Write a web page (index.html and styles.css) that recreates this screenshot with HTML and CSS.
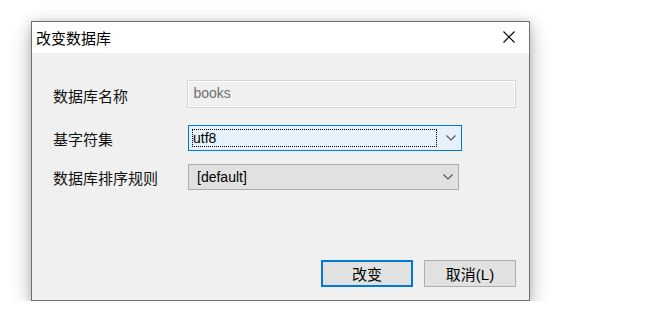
FILE: index.html
```html
<!DOCTYPE html>
<html lang="zh">
<head>
<meta charset="utf-8">
<title>改变数据库</title>
<link rel="stylesheet" href="styles.css">
</head>
<body>
<div class="stage">
  <div class="dialog">
    <div class="titlebar">
      <span class="title">改变数据库</span>
      <span class="close">
        <svg width="12" height="12" viewBox="0 0 12 12"><path d="M0.5 0.5 L11.5 11.5 M11.5 0.5 L0.5 11.5" stroke="#000" stroke-width="1.1" fill="none"/></svg>
      </span>
    </div>
    <div class="content">
      <div class="row row-name">
        <span class="label">数据库名称</span>
        <div class="input"><span class="latin">books</span></div>
      </div>
      <div class="row row-charset">
        <span class="label">基字符集</span>
        <div class="select focused">
          <span class="focus-rect"><span class="latin">utf8</span></span>
          <svg class="chev" width="10" height="6" viewBox="0 0 10 6"><path d="M0.5 0.5 L5 5 L9.5 0.5" stroke="#555" stroke-width="1.1" fill="none"/></svg>
        </div>
      </div>
      <div class="row row-collation">
        <span class="label">数据库排序规则</span>
        <div class="select plain">
          <span class="value latin">[default]</span>
          <svg class="chev" width="10" height="6" viewBox="0 0 10 6"><path d="M0.5 0.5 L5 5 L9.5 0.5" stroke="#555" stroke-width="1.1" fill="none"/></svg>
        </div>
      </div>
      <div class="spacer"></div>
      <div class="buttons">
        <button class="btn default">改变</button>
        <button class="btn">取消<span class="latin btn-latin">(L)</span></button>
      </div>
    </div>
  </div>
</div>
</body>
</html>
```

FILE: styles.css
```css
* { box-sizing: border-box; }
html, body {
  margin: 0;
  background: #ffffff;
}
body {
  font-family: "Noto Sans CJK SC", "Noto Sans", sans-serif;
  font-size: 15px;
  color: #000;
}
.latin {
  font-family: "Liberation Sans", Arial, sans-serif;
  font-size: 14px;
}
.btn-latin {
  font-size: 15px;
}
.stage {
  padding: 21px 0 0 31px;
}
.dialog {
  width: 499px;
  height: 280px;
  border: 1px solid #6f6f6f;
  background: #f0f0f0;
  display: flex;
  flex-direction: column;
  box-shadow: 0 6px 18px rgba(0,0,0,0.32), 0 0 6px rgba(0,0,0,0.1);
}
.titlebar {
  height: 31px;
  background: #ffffff;
  display: flex;
  align-items: center;
  justify-content: space-between;
  padding: 0 14px 0 4px;
}
.title {
  font-size: 15px;
  line-height: 1;
  margin-top: -1px;
}
.close {
  display: flex;
  align-items: center;
  margin-top: -2px;
}
.content {
  flex: 1;
  display: flex;
  flex-direction: column;
  padding: 27px 13px 13px 21px;
}
.row {
  display: flex;
  align-items: center;
}
.label {
  width: 135px;
  line-height: 1;
  color: #111;
}
.row-name .label { margin-top: 3px; }
.row-charset { margin-top: 17px; }
.row-collation { margin-top: 13px; }
.input {
  width: 330px;
  height: 28px;
  border: 1px solid #d6d6d6;
  box-shadow: inset 0 0 0 1px #ffffff;
  background: #f0f0f0;
  color: #6d6d6d;
  padding: 0 0 2px 5px;
  display: flex;
  align-items: center;
  line-height: 1;
}
.select {
  height: 26px;
  display: flex;
  align-items: center;
  justify-content: space-between;
  line-height: 1;
}
.select.focused {
  width: 274px;
  border: 1px solid #0078d7;
  background: #e5f1fb;
  padding: 3px 5px 3px 3px;
}
.focus-rect {
  flex: 0 0 245px;
  height: 18px;
  border: 1px dotted #000;
  display: flex;
  align-items: center;
  padding-left: 0;
  padding-bottom: 1px;
}
.select.plain {
  width: 271px;
  border: 1px solid #adadad;
  background: #e1e1e1;
  padding: 0 5px 0 8px;
  height: 26px;
}
.value { padding-bottom: 1px; }
.spacer { flex: 1; }
.buttons {
  display: flex;
  justify-content: flex-end;
  gap: 11px;
}
.btn {
  width: 92px;
  height: 27px;
  border: 1px solid #adadad;
  background: #e1e1e1;
  font-family: "Noto Sans CJK SC", "Noto Sans", sans-serif;
  font-size: 15px;
  color: #000;
  line-height: 1;
  padding: 0;
}
.btn.default {
  border: 2px solid #0078d7;
}
```
